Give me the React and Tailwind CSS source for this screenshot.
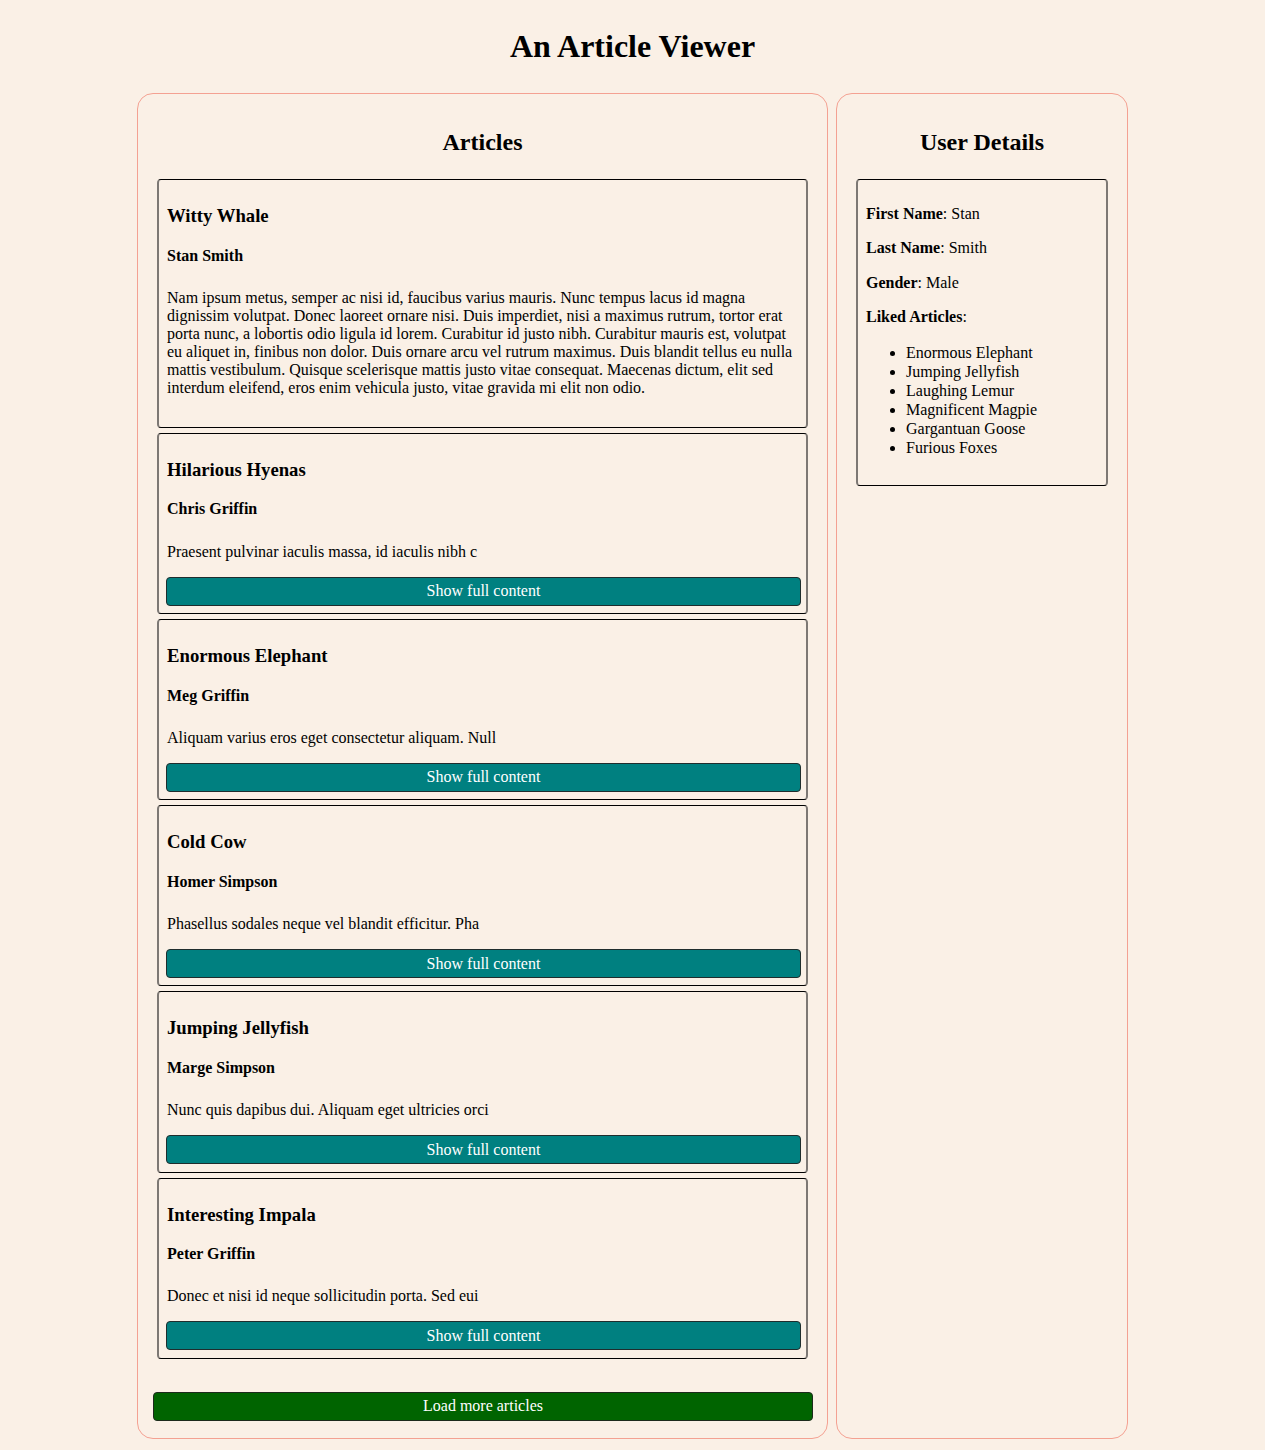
import React from 'react';

// 기사 목록 데이터
const articles = [
  {
    id: 1,
    title: 'Witty Whale',
    author: 'Stan Smith',
    content:
      'Nam ipsum metus, semper ac nisi id, faucibus varius mauris. Nunc tempus lacus id magna dignissim volutpat. Donec laoreet ornare nisi. Duis imperdiet, nisi a maximus rutrum, tortor erat porta nunc, a lobortis odio ligula id lorem. Curabitur id justo nibh. Curabitur mauris est, volutpat eu aliquet in, finibus non dolor. Duis ornare arcu vel rutrum maximus. Duis blandit tellus eu nulla mattis vestibulum. Quisque scelerisque mattis justo vitae consequat. Maecenas dictum, elit sed interdum eleifend, eros enim vehicula justo, vitae gravida mi elit non odio.',
    full: true,
  },
  { id: 2, title: 'Hilarious Hyenas', author: 'Chris Griffin', content: 'Praesent pulvinar iaculis massa, id iaculis nibh c' },
  { id: 3, title: 'Enormous Elephant', author: 'Meg Griffin', content: 'Aliquam varius eros eget consectetur aliquam. Null' },
  { id: 4, title: 'Cold Cow', author: 'Homer Simpson', content: 'Phasellus sodales neque vel blandit efficitur. Pha' },
  { id: 5, title: 'Jumping Jellyfish', author: 'Marge Simpson', content: 'Nunc quis dapibus dui. Aliquam eget ultricies orci' },
  { id: 6, title: 'Interesting Impala', author: 'Peter Griffin', content: 'Donec et nisi id neque sollicitudin porta. Sed eui' },
];

const likedArticles = [
  'Enormous Elephant',
  'Jumping Jellyfish',
  'Laughing Lemur',
  'Magnificent Magpie',
  'Gargantuan Goose',
  'Furious Foxes',
];

const ArticleCard = ({ article }) => (
  <div
    className={`border-y border-y-black border-x-2 border-x-[#7d7874] rounded-[4px] pl-[8px] pr-[6px] pt-[5px] ${
      article.full ? 'pb-[14px]' : 'pb-[7.25px]'
    }`}
  >
    <h3 className="text-[18.72px] font-bold leading-[21.5px] mt-[20px]">{article.title}</h3>
    <h4 className="text-[16px] font-bold leading-[18.4px] mt-[20px]">{article.author}</h4>
    <p className="text-[16px] leading-[18px] mt-[24px] mb-[16px]">{article.content}</p>
    {!article.full && (
      <button className="block w-[calc(100%+2px)] -ml-[1px] h-[29px] bg-[#008080] text-white text-[16px] leading-[18px] border border-[#1f2d2d] rounded-[4px]">
        Show full content
      </button>
    )}
  </div>
);

const UserDetails = () => (
  <div className="border-y border-y-black border-x-2 border-x-[#7d7874] rounded-[4px] pl-[8px] pr-[8px] pt-[9px] pb-[12px]">
    <p className="mt-[16px] leading-[18.4px]">
      <b>First Name</b>: Stan
    </p>
    <p className="mt-[16px] leading-[18.4px]">
      <b>Last Name</b>: Smith
    </p>
    <p className="mt-[16px] leading-[18.4px]">
      <b>Gender</b>: Male
    </p>
    <p className="mt-[16px] leading-[18.4px]">
      <b>Liked Articles</b>:
    </p>
    <ul className="list-disc pl-[40px] mt-[16px] mb-[16px]">
      {likedArticles.map((name) => (
        <li key={name} className="leading-[19px]">
          {name}
        </li>
      ))}
    </ul>
  </div>
);

export default function App() {
  return (
    <div
      className="min-h-[1450px] bg-[#faf0e6] text-black text-[16px] pt-[28px]"
      style={{ fontFamily: '"Liberation Serif", "Times New Roman", serif' }}
    >
      <h1 className="text-[32px] font-bold text-center leading-[37px]">An Article Viewer</h1>

      <div className="w-[991px] mx-auto mt-[28px] flex gap-[8px] items-stretch">
        {/* 기사 영역 */}
        <div className="w-[691px] border border-[#f4a192] rounded-[16px] pt-[34px] pb-[17px]">
          <h2 className="text-[24px] font-bold text-center leading-[28px]">Articles</h2>
          <div className="px-[19px] mt-[23px] flex flex-col gap-[5px]">
            {articles.map((a) => (
              <ArticleCard key={a.id} article={a} />
            ))}
          </div>
          <button className="block ml-[15px] w-[660px] mt-[33px] h-[29px] bg-[#006400] text-white text-[16px] leading-[18px] border border-[#1c2a1c] rounded-[4px]">
            Load more articles
          </button>
        </div>

        {/* 사용자 정보 */}
        <div className="w-[292px] border border-[#f4a192] rounded-[16px] pt-[34px] px-[19px]">
          <h2 className="text-[24px] font-bold text-center leading-[28px]">User Details</h2>
          <div className="mt-[23px]">
            <UserDetails />
          </div>
        </div>
      </div>
    </div>
  );
}
